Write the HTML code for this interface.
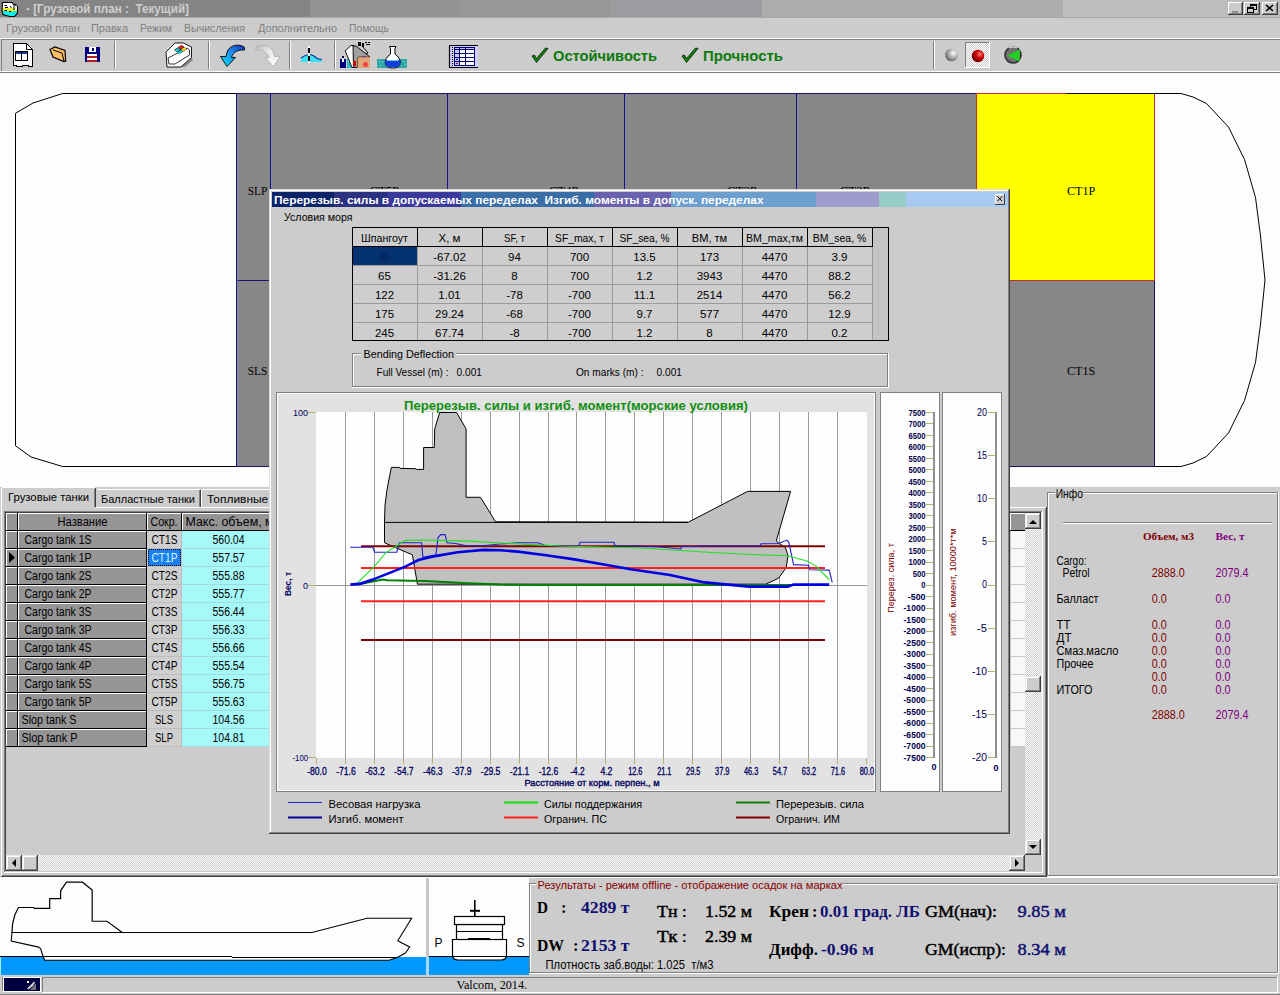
<!DOCTYPE html>
<html><head><meta charset="utf-8"><title>Valcom</title>
<style>
html,body{margin:0;padding:0;background:#cccccc;overflow:hidden;}
svg{display:block;}
text{font-family:"Liberation Sans",sans-serif;}
.sr text,text.sr{font-family:"Liberation Serif",serif;}
.c{shape-rendering:crispEdges;}
</style></head><body>
<svg width="1280" height="995" viewBox="0 0 1280 995">
<defs>
<pattern id="dith" width="2" height="2" patternUnits="userSpaceOnUse"><rect width="2" height="2" fill="#cccccc"/><rect width="1" height="1" fill="#ffffff"/><rect x="1" y="1" width="1" height="1" fill="#ffffff"/></pattern>
<radialGradient id="gsph" cx="0.65" cy="0.35" r="0.7"><stop offset="0" stop-color="#ffffff"/><stop offset="0.5" stop-color="#b0b0b0"/><stop offset="1" stop-color="#606060"/></radialGradient>
<radialGradient id="rsph" cx="0.65" cy="0.35" r="0.7"><stop offset="0" stop-color="#ff8080"/><stop offset="0.45" stop-color="#d00000"/><stop offset="1" stop-color="#600000"/></radialGradient>
</defs>
<rect width="1280" height="995" fill="#cccccc"/>
<!-- TITLE BAR -->
<g class="c">
<rect x="0" y="17" width="1280" height="1" fill="#a8a8a8"/>
<rect x="0" y="0" width="310" height="17" fill="#848484"/>
<rect x="310" y="0" width="151" height="17" fill="#949494"/>
<rect x="461" y="0" width="150" height="17" fill="#979797"/>
<rect x="611" y="0" width="151" height="17" fill="#9b9c9f"/>
<rect x="762" y="0" width="301" height="17" fill="#adadad"/>
<rect x="1063" y="0" width="217" height="17" fill="#bdbdbd"/>
</g>
<!-- app icon -->
<defs><linearGradient id="appg" x1="0" y1="0" x2="0" y2="1"><stop offset="0" stop-color="#ffffff"/><stop offset="0.38" stop-color="#ffffff"/><stop offset="0.38" stop-color="#f0f020"/><stop offset="0.6" stop-color="#f0f020"/><stop offset="0.6" stop-color="#10f0f0"/><stop offset="1" stop-color="#10f0f0"/></linearGradient></defs>
<path d="M2.5 2.5 L12.5 2.5 L13 4 L15 4.5 L17.5 7 L17.5 13 L14.5 16.5 L10 16.5 L6 15.5 L3 14.5 L2 11 Z" fill="url(#appg)" stroke="#000" stroke-width="1.1"/>
<path d="M4.5 5.5 H7 M5 7.5 H8 M10 6 L11.5 8 M4.5 10.5 H7 M9 11.5 H11 M14 5 V10" stroke="#000" stroke-width="1"/>
<rect x="15" y="6" width="2" height="4" fill="#f8f8d0"/>
<text x="26" y="13" font-size="12" font-weight="bold" fill="#cfcfcf" style="white-space:pre" textLength="163" lengthAdjust="spacingAndGlyphs">- [Грузовой план :  Текущий]</text>
<!-- caption buttons -->
<g class="c">
<rect x="1228" y="2" width="15" height="13" fill="#cccccc"/><rect x="1228" y="2" width="15" height="1" fill="#fff"/><rect x="1228" y="2" width="1" height="13" fill="#fff"/><rect x="1228" y="14" width="15" height="1" fill="#404040"/><rect x="1242" y="2" width="1" height="13" fill="#404040"/><rect x="1229" y="13" width="13" height="1" fill="#808080"/><rect x="1241" y="3" width="1" height="11" fill="#808080"/>
<rect x="1232" y="11" width="6" height="1.5" fill="#909090"/>
<rect x="1244" y="2" width="16" height="13" fill="#cccccc"/><rect x="1244" y="2" width="16" height="1" fill="#fff"/><rect x="1244" y="2" width="1" height="13" fill="#fff"/><rect x="1244" y="14" width="16" height="1" fill="#404040"/><rect x="1259" y="2" width="1" height="13" fill="#404040"/><rect x="1245" y="13" width="14" height="1" fill="#808080"/><rect x="1258" y="3" width="1" height="11" fill="#808080"/>
<rect x="1250" y="4.5" width="6" height="5" fill="none" stroke="#000" stroke-width="1"/><rect x="1250" y="4" width="6" height="2" fill="#000"/>
<rect x="1247.5" y="7.5" width="6" height="5" fill="#cccccc" stroke="#000" stroke-width="1"/><rect x="1247" y="7" width="7" height="2" fill="#000"/>
<rect x="1262" y="2" width="16" height="13" fill="#cccccc"/><rect x="1262" y="2" width="16" height="1" fill="#fff"/><rect x="1262" y="2" width="1" height="13" fill="#fff"/><rect x="1262" y="14" width="16" height="1" fill="#404040"/><rect x="1277" y="2" width="1" height="13" fill="#404040"/><rect x="1263" y="13" width="14" height="1" fill="#808080"/><rect x="1276" y="3" width="1" height="11" fill="#808080"/>
</g>
<path d="M1266 5 L1273 11 M1273 5 L1266 11" stroke="#000" stroke-width="1.6"/>
<!-- MENU BAR -->
<g fill="#808080" font-size="11">
<text x="6" y="32" textLength="74" lengthAdjust="spacingAndGlyphs">Грузовой план</text>
<text x="91" y="32" textLength="37" lengthAdjust="spacingAndGlyphs">Правка</text>
<text x="140" y="32" textLength="32" lengthAdjust="spacingAndGlyphs">Режим</text>
<text x="184" y="32" textLength="61" lengthAdjust="spacingAndGlyphs">Вычисления</text>
<text x="258" y="32" textLength="79" lengthAdjust="spacingAndGlyphs">Дополнительно</text>
<text x="349" y="32" textLength="40" lengthAdjust="spacingAndGlyphs">Помощь</text>
</g>
<!-- TOOLBAR -->
<g class="c">
<rect x="0" y="38" width="1280" height="1" fill="#ffffff"/>
<rect x="1" y="39" width="1279" height="1" fill="#808080"/>
<rect x="1" y="39" width="1" height="32" fill="#808080"/>
<rect x="0" y="71" width="1280" height="1" fill="#ffffff"/>
<rect x="0" y="72" width="1280" height="1" fill="#808080"/>
<rect x="114" y="41" width="1" height="28" fill="#808080"/><rect x="115" y="41" width="1" height="28" fill="#ffffff"/>
<rect x="208" y="41" width="1" height="28" fill="#808080"/><rect x="209" y="41" width="1" height="28" fill="#ffffff"/>
<rect x="289" y="41" width="1" height="28" fill="#808080"/><rect x="290" y="41" width="1" height="28" fill="#ffffff"/>
<rect x="334" y="41" width="1" height="28" fill="#808080"/><rect x="335" y="41" width="1" height="28" fill="#ffffff"/>
<rect x="933" y="41" width="1" height="28" fill="#808080"/><rect x="934" y="41" width="1" height="28" fill="#ffffff"/>
</g>
<!-- toolbar icons -->
<g>
<!-- doc icon -->
<path d="M13.5 43.5 H26.5 L32.5 49.5 V66.5 H29 L28 65.5 H23 L22 66.5 H17 L16 65.5 H13.5 Z" fill="#ffffff" stroke="#000" stroke-width="1" class="c"/>
<path d="M26.5 43.5 V49.5 H32.5" fill="none" stroke="#000" stroke-width="1"/>
<rect x="15.5" y="51.5" width="12" height="9" fill="#fff" stroke="#000" stroke-width="1" class="c"/>
<rect x="16" y="52" width="11" height="2" fill="#1a3a8a" class="c"/>
<rect x="21" y="52" width="1" height="8" fill="#000" class="c"/>
<!-- folder -->
<path d="M50 49.5 L55 47 L65 50.5 L65.7 61 L64 61.6 L53 57 Z" fill="#f8c060" stroke="#000" stroke-width="1.2"/>
<path d="M53 50 L62 53 L64 61" fill="none" stroke="#000" stroke-width="1"/>
<!-- floppy -->
<rect x="85" y="47" width="15" height="15" fill="#000080" class="c"/>
<rect x="89" y="47" width="7" height="5" fill="#ffffff" class="c"/><rect x="92" y="48" width="2" height="3" fill="#000080" class="c"/>
<rect x="87" y="54" width="10" height="2" fill="#ffffff" class="c"/><rect x="87" y="56" width="10" height="2" fill="#b02020" class="c"/>
<rect x="87" y="58" width="10" height="2" fill="#ffffff" class="c"/><rect x="87" y="60" width="10" height="2" fill="#b02020" class="c"/>
<!-- tag/eraser icon -->
<path d="M191.5 57 L181 67 L185 67 L193 60 Z" fill="#8a8a8a"/>
<path d="M166 52 L175 43 L183.5 43 L191.5 47 L191.5 57.5 L181 67 L167 67 Z" fill="#ffffff" stroke="#000" stroke-width="0.9"/>
<path d="M168 58 L172 56 L187 48 L189.5 50 L189.5 55 L175 64 L169 64 Z" fill="none" stroke="#000" stroke-width="0.8"/>
<path d="M174 50 L181.5 45 L187 49 L179.5 54 Z" fill="#000"/>
<path d="M178 47.5 L181.5 45.3 L184 47 L180.5 49.2 Z" fill="#e02020"/>
<path d="M181 49.5 L184.5 47.3 L186.6 49 L183 51.2 Z" fill="#f0e020"/>
<path d="M174.5 50.3 L178 48 L180.2 49.6 L176.7 51.9 Z" fill="#20c8d8"/>
<path d="M177.3 52.3 L180.8 50 L183 51.6 L179.5 53.9 Z" fill="#20c8d8"/>
<!-- undo arrow (blue) -->
<defs><linearGradient id="ublue" x1="0" y1="1" x2="1" y2="0"><stop offset="0" stop-color="#00e8f8"/><stop offset="0.55" stop-color="#2090f0"/><stop offset="1" stop-color="#1030c0"/></linearGradient>
<linearGradient id="ugray" x1="1" y1="1" x2="0" y2="0"><stop offset="0" stop-color="#ffffff"/><stop offset="0.6" stop-color="#e8e8e8"/><stop offset="1" stop-color="#b8b8b8"/></linearGradient></defs>
<path d="M220.5 56.5 L227 66.5 L235.5 57.5 L231.5 57.5 C233 52 238 49.5 244.5 50 L244.5 47.5 C241 44 232 44 228 50 C227 52 226.5 54 226 56.5 Z" fill="url(#ublue)" stroke="#000" stroke-width="0.9"/>
<!-- redo arrow (gray) -->
<path d="M280 56.5 L273.5 66.5 L265 57.5 L269 57.5 C267.5 52 262.5 49.5 256 50 L255.5 47.5 C259 44 268 44 272.5 50 C273.5 52 274 54 274.5 56.5 Z" fill="url(#ugray)" stroke="#b0b0b0" stroke-width="0.9"/>
<!-- draft icon -->
<path d="M301 58 Q305 55 309 54.5 Q313 54.5 317 58.5 L321.7 59.7 L321.7 62 L301 62 Z" fill="#40e0f0"/>
<path d="M301 58 Q305 55 309 54.5 Q313 54.5 317 58.5 L321.7 59.7" fill="none" stroke="#0030a0" stroke-width="1.2"/>
<rect x="308" y="46" width="2" height="17" fill="#ffffff" class="c"/>
<rect x="308" y="48" width="2" height="5" fill="#000" class="c"/><rect x="308" y="56" width="2" height="5" fill="#000" class="c"/>
<!-- cargo icon -->
<rect x="346.5" y="59" width="6" height="9" fill="#30b8c0" class="c"/>
<g fill="#a0f0f0" class="c"><rect x="348" y="61" width="1" height="1"/><rect x="350" y="64" width="1" height="1"/></g>
<path d="M345.2 50.8 L351 45.5 L354 45.5 L353.5 67.5 L352 67.5 Z" fill="#ffffff" stroke="#000" stroke-width="0.9"/>
<path d="M353 46 L356 46 L370 57 L358 67.5 L353.5 67.5 Z" fill="#a0a0a0" stroke="#000" stroke-width="0.9"/>
<rect x="358" y="42" width="3" height="4" fill="#000" class="c"/><rect x="362" y="43" width="2" height="4" fill="#000" class="c"/>
<rect x="365" y="42" width="2" height="1" fill="#000" class="c"/><rect x="368" y="42" width="2" height="1" fill="#000" class="c"/><rect x="366" y="44" width="4" height="1" fill="#000" class="c"/>
<path d="M363 47 L368 53 L366 54" fill="none" stroke="#000" stroke-width="0.9"/>
<rect x="357" y="57" width="13" height="11" fill="#e0a878" class="c"/>
<path d="M357.5 68 V57.5 L362 56.5 L370 57" fill="none" stroke="#704020" stroke-width="0.8"/>
<circle cx="365.5" cy="64.5" r="2.5" fill="#f04040"/>
<path d="M362 57.5 L364 56 L366 57.5" fill="#6040c0"/>
<rect x="353" y="61" width="3" height="5" fill="#d00000" class="c"/>
<rect x="340" y="58.5" width="6" height="9" fill="#000080" class="c"/><rect x="342" y="56" width="2" height="2" fill="#000040" class="c"/>
<rect x="342" y="59" width="2" height="3" fill="#ffffff" class="c"/>
<!-- flask icon -->
<rect x="377" y="59" width="30" height="9" fill="#30a8a8" class="c"/>
<g fill="#80e0e0" class="c"><rect x="379" y="61" width="1" height="1"/><rect x="382" y="62" width="1" height="1"/><rect x="380" y="65" width="1" height="1"/><rect x="403" y="61" width="1" height="1"/><rect x="405" y="64" width="1" height="1"/></g>
<path d="M389.5 46.5 H396 L395 48.5 V54 Q401 58.5 400.2 63.5 Q399.5 68 392.75 68 Q386 68 385.3 63.5 Q384.5 58.5 390.5 54 V48.5 Z" fill="#ffffff" stroke="#000" stroke-width="1"/>
<path d="M385.6 60 H399.9 Q400.8 62 400.2 63.5 Q399.5 67.5 392.75 67.5 Q386 67.5 385.3 63.5 Q384.8 62 385.6 60 Z" fill="#1040d8"/>
<path d="M387 60.5 H398.5" stroke="#60d0f0" stroke-width="1"/>
<!-- table icon -->
<rect x="449" y="45" width="29" height="23" fill="#d0d0ff" class="c"/>
<path d="M478 45.5 H449.5 V67.5 H478" fill="none" stroke="#000" stroke-width="1.2"/>
<rect x="454" y="47" width="21" height="19" fill="#000070" class="c"/>
<rect x="455" y="48" width="4" height="1" fill="#c0c0ff" class="c"/><rect x="460" y="48" width="5" height="1" fill="#c0c0ff" class="c"/><rect x="466" y="48" width="8" height="1" fill="#c0c0ff" class="c"/>
<g fill="#ffffff" class="c">
<rect x="460" y="50" width="5" height="3"/><rect x="466" y="50" width="8" height="3"/>
<rect x="460" y="54" width="5" height="3"/><rect x="466" y="54" width="8" height="3"/>
<rect x="460" y="58" width="5" height="3"/><rect x="466" y="58" width="8" height="3"/>
<rect x="460" y="62" width="5" height="3"/><rect x="466" y="62" width="8" height="3"/>
</g>
<g fill="#c8c8ff" class="c"><rect x="455" y="50" width="4" height="3"/><rect x="455" y="54" width="4" height="3"/><rect x="455" y="58" width="4" height="3"/><rect x="455" y="62" width="4" height="3"/></g>
<rect x="456" y="59" width="2" height="1" fill="#000080" class="c"/><rect x="456" y="63" width="2" height="1" fill="#800020" class="c"/>
<g fill="#000" class="c"><rect x="452" y="47" width="1" height="1"/><rect x="452" y="49" width="1" height="1"/><rect x="452" y="51" width="1" height="1"/><rect x="452" y="53" width="1" height="1"/><rect x="452" y="55" width="1" height="1"/><rect x="452" y="57" width="1" height="1"/><rect x="452" y="59" width="1" height="1"/><rect x="452" y="61" width="1" height="1"/><rect x="452" y="63" width="1" height="1"/><rect x="452" y="65" width="1" height="1"/></g>
<!-- checks + labels -->
<path d="M532 56 L536.5 62.5 L548 48.5 L545.5 48 L536.5 58.5 L534.5 55 Z" fill="#108010" stroke="#002000" stroke-width="0.8"/>
<text x="553" y="61" font-size="14" font-weight="bold" fill="#0a7a0a" textLength="104" lengthAdjust="spacingAndGlyphs">Остойчивость</text>
<path d="M682 56 L686.5 62.5 L698 48.5 L695.5 48 L686.5 58.5 L684.5 55 Z" fill="#108010" stroke="#002000" stroke-width="0.8"/>
<text x="703" y="61" font-size="14" font-weight="bold" fill="#0a7a0a" textLength="80" lengthAdjust="spacingAndGlyphs">Прочность</text>
<!-- spheres -->
<circle cx="951.5" cy="55" r="6.3" fill="url(#gsph)"/>
<rect x="965" y="42" width="25" height="26" fill="url(#dith)" class="c"/>
<rect x="965" y="42" width="25" height="1" fill="#808080" class="c"/><rect x="965" y="42" width="1" height="26" fill="#808080" class="c"/>
<rect x="965" y="67" width="25" height="1" fill="#ffffff" class="c"/><rect x="989" y="42" width="1" height="26" fill="#ffffff" class="c"/>
<circle cx="978" cy="56" r="6.2" fill="url(#rsph)"/>
<circle cx="1013" cy="55" r="8.8" fill="#303030"/>
<circle cx="1013" cy="55" r="7.2" fill="#707070"/>
<path d="M1007 55.5 L1020 49.5 L1019.5 61.5 Z" fill="#20d020"/>
<path d="M1009 48 Q1013 46 1017 48" stroke="#d0d0d0" stroke-width="1.5" fill="none"/>
</g>
<!-- MAIN PLAN AREA -->
<rect x="0" y="73" width="1280" height="414" fill="#fdfdfd" class="c"/>
<g class="c">
<rect x="237" y="94" width="33" height="186" fill="#878787"/>
<rect x="237" y="280" width="33" height="187" fill="#878787"/>
<rect x="270" y="94" width="707" height="373" fill="#878787"/>
<rect x="977" y="94" width="177" height="186" fill="#ffff00"/>
<rect x="977" y="280" width="177" height="187" fill="#878787"/>
<!-- blue tank borders -->
<g fill="#16166c">
<rect x="236" y="93" width="741" height="1"/>
<rect x="236" y="466" width="918" height="1"/>
<rect x="236" y="93" width="1" height="374"/>
<rect x="270" y="93" width="1" height="374"/>
<rect x="447" y="93" width="1" height="374"/>
<rect x="624" y="93" width="1" height="374"/>
<rect x="796" y="93" width="1" height="374"/>
<rect x="236" y="280" width="741" height="1"/>
<rect x="977" y="280" width="177" height="1"/>
<rect x="1154" y="280" width="1" height="187"/>
<rect x="976" y="280" width="1" height="187"/>
</g>
<g fill="#8080e0" opacity="0.6">
<rect x="237" y="94" width="1" height="372"/><rect x="271" y="94" width="1" height="372"/><rect x="448" y="94" width="1" height="372"/><rect x="625" y="94" width="1" height="372"/><rect x="797" y="94" width="1" height="372"/>
</g>
<!-- CT1P red border -->
<rect x="977" y="93" width="178" height="1" fill="#c03030"/>
<rect x="976" y="93" width="1" height="188" fill="#c03030"/>
<rect x="1154" y="93" width="1" height="188" fill="#c03030"/>
<rect x="977" y="280" width="178" height="1" fill="#c03030"/>
<rect x="1066" y="93" width="89" height="1" fill="#101010"/>
</g>
<!-- hull outline -->
<path d="M236 93.5 H62.6 L33 103 L15.5 113.3 V445.8 L31 457 L62.6 466.5 H236" fill="none" stroke="#000" stroke-width="1"/>
<path d="M1154.5 93.5 H1181 L1193 97 L1206.5 103.5 L1228.5 127 L1244.5 159.5 L1255.5 197.5 L1260.5 236 L1265 280 L1260.5 324 L1255.5 362.5 L1244.5 400.5 L1228.5 433 L1206.5 456.5 L1193 463 L1181 466.5 H1154.5" fill="none" stroke="#000" stroke-width="1"/>
<!-- tank labels -->
<g class="sr" font-size="13" fill="#000">
<text x="247.7" y="194.7" textLength="19.5" lengthAdjust="spacingAndGlyphs">SLP</text>
<text x="247.7" y="375" textLength="19.5" lengthAdjust="spacingAndGlyphs">SLS</text>
<text x="1067" y="194.7" textLength="28.3" lengthAdjust="spacingAndGlyphs">CT1P</text>
<text x="1067" y="375" textLength="28.3" lengthAdjust="spacingAndGlyphs">CT1S</text>
<text x="369.5" y="194.7" textLength="29.5" lengthAdjust="spacingAndGlyphs">CT5P</text>
<text x="549" y="194.7" textLength="29.5" lengthAdjust="spacingAndGlyphs">CT4P</text>
<text x="727" y="194.7" textLength="30" lengthAdjust="spacingAndGlyphs">CT3P</text>
<text x="840" y="194.7" textLength="29.5" lengthAdjust="spacingAndGlyphs">CT2P</text>
</g>
<!-- LOWER PANEL -->
<g class="c">
<rect x="0" y="487" width="1280" height="390" fill="#cccccc"/>
<rect x="1" y="507" width="1045" height="1" fill="#ffffff"/>
<rect x="1" y="507" width="1" height="369" fill="#ffffff"/>
<rect x="1045" y="508" width="1" height="368" fill="#808080"/><rect x="1046" y="507" width="1" height="370" fill="#404040"/>
<rect x="2" y="875" width="1044" height="1" fill="#808080"/><rect x="1" y="876" width="1046" height="1" fill="#404040"/>
<rect x="1" y="488" width="95" height="20" fill="#cccccc"/>
<rect x="1" y="488" width="1" height="20" fill="#ffffff"/><rect x="2" y="487" width="93" height="1" fill="#ffffff"/>
<rect x="95" y="488" width="1" height="19" fill="#404040"/><rect x="94" y="489" width="1" height="18" fill="#808080"/>
<rect x="96" y="490" width="105" height="17" fill="#cccccc"/>
<rect x="97" y="489" width="103" height="1" fill="#ffffff"/><rect x="200" y="490" width="1" height="17" fill="#404040"/><rect x="199" y="490" width="1" height="17" fill="#808080"/>
<rect x="201" y="490" width="80" height="17" fill="#cccccc"/>
<rect x="201" y="490" width="1" height="17" fill="#ffffff"/><rect x="202" y="489" width="80" height="1" fill="#ffffff"/>
<rect x="4" y="511" width="1038" height="1" fill="#808080"/><rect x="4" y="511" width="1" height="361" fill="#808080"/>
<rect x="5" y="512" width="1036" height="1" fill="#404040"/><rect x="5" y="512" width="1" height="359" fill="#404040"/>
<rect x="4" y="872" width="1039" height="1" fill="#ffffff"/><rect x="1042" y="511" width="1" height="362" fill="#ffffff"/>
</g>
<g font-size="11" fill="#000">
<text x="8" y="501" textLength="81" lengthAdjust="spacingAndGlyphs">Грузовые танки</text>
<text x="101" y="503" textLength="94" lengthAdjust="spacingAndGlyphs">Балластные танки</text>
<text x="207" y="503" textLength="70" lengthAdjust="spacingAndGlyphs">Топливные т</text>
</g>
<g class="c">
<rect x="6" y="513" width="12" height="18" fill="#959595"/><rect x="6" y="513" width="12" height="1" fill="#ffffff"/><rect x="6" y="513" width="1" height="18" fill="#ffffff"/><rect x="6" y="530" width="12" height="1" fill="#000000"/><rect x="17" y="513" width="1" height="18" fill="#000000"/>
<rect x="18" y="513" width="129" height="18" fill="#959595"/><rect x="18" y="513" width="129" height="1" fill="#ffffff"/><rect x="18" y="513" width="1" height="18" fill="#ffffff"/><rect x="18" y="530" width="129" height="1" fill="#000000"/><rect x="146" y="513" width="1" height="18" fill="#000000"/>
<rect x="147" y="513" width="35" height="18" fill="#959595"/><rect x="147" y="513" width="35" height="1" fill="#ffffff"/><rect x="147" y="513" width="1" height="18" fill="#ffffff"/><rect x="147" y="530" width="35" height="1" fill="#000000"/><rect x="181" y="513" width="1" height="18" fill="#000000"/>
<rect x="182" y="513" width="100" height="18" fill="#959595"/><rect x="182" y="513" width="100" height="1" fill="#ffffff"/><rect x="182" y="513" width="1" height="18" fill="#ffffff"/><rect x="182" y="530" width="100" height="1" fill="#000000"/><rect x="281" y="513" width="1" height="18" fill="#000000"/>
<rect x="1010" y="513" width="16" height="18" fill="#959595"/><rect x="1010" y="513" width="16" height="1" fill="#ffffff"/><rect x="1010" y="513" width="1" height="18" fill="#ffffff"/><rect x="1010" y="530" width="16" height="1" fill="#000000"/><rect x="1025" y="513" width="1" height="18" fill="#000000"/>
<rect x="6" y="531" width="12" height="18" fill="#959595"/><rect x="6" y="531" width="12" height="1" fill="#ffffff"/><rect x="6" y="531" width="1" height="18" fill="#ffffff"/><rect x="6" y="548" width="12" height="1" fill="#000000"/><rect x="17" y="531" width="1" height="18" fill="#000000"/>
<rect x="18" y="531" width="129" height="18" fill="#959595"/><rect x="18" y="531" width="129" height="1" fill="#ffffff"/><rect x="18" y="531" width="1" height="18" fill="#ffffff"/><rect x="18" y="548" width="129" height="1" fill="#000000"/><rect x="146" y="531" width="1" height="18" fill="#000000"/>
<rect x="147" y="531" width="35" height="18" fill="#cfcfcf"/><rect x="147" y="548" width="35" height="1" fill="#bdbdbd"/><rect x="181" y="531" width="1" height="18" fill="#bdbdbd"/>
<rect x="182" y="531" width="100" height="18" fill="#a6f9f9"/><rect x="182" y="548" width="100" height="1" fill="#a0dcdc"/>
<rect x="1010" y="531" width="15" height="18" fill="#f8f8f8"/><rect x="1010" y="548" width="15" height="1" fill="#c8c8c8"/><rect x="1010" y="531" width="1" height="18" fill="#c8c8c8"/>
<rect x="6" y="549" width="12" height="18" fill="#959595"/><rect x="6" y="549" width="12" height="1" fill="#ffffff"/><rect x="6" y="549" width="1" height="18" fill="#ffffff"/><rect x="6" y="566" width="12" height="1" fill="#000000"/><rect x="17" y="549" width="1" height="18" fill="#000000"/>
<rect x="18" y="549" width="129" height="18" fill="#959595"/><rect x="18" y="549" width="129" height="1" fill="#ffffff"/><rect x="18" y="549" width="1" height="18" fill="#ffffff"/><rect x="18" y="566" width="129" height="1" fill="#000000"/><rect x="146" y="549" width="1" height="18" fill="#000000"/>
<rect x="147" y="549" width="35" height="18" fill="#cfcfcf"/><rect x="147" y="566" width="35" height="1" fill="#bdbdbd"/><rect x="181" y="549" width="1" height="18" fill="#bdbdbd"/>
<rect x="182" y="549" width="100" height="18" fill="#a6f9f9"/><rect x="182" y="566" width="100" height="1" fill="#a0dcdc"/>
<rect x="1010" y="549" width="15" height="18" fill="#f8f8f8"/><rect x="1010" y="566" width="15" height="1" fill="#c8c8c8"/><rect x="1010" y="549" width="1" height="18" fill="#c8c8c8"/>
<rect x="6" y="567" width="12" height="18" fill="#959595"/><rect x="6" y="567" width="12" height="1" fill="#ffffff"/><rect x="6" y="567" width="1" height="18" fill="#ffffff"/><rect x="6" y="584" width="12" height="1" fill="#000000"/><rect x="17" y="567" width="1" height="18" fill="#000000"/>
<rect x="18" y="567" width="129" height="18" fill="#959595"/><rect x="18" y="567" width="129" height="1" fill="#ffffff"/><rect x="18" y="567" width="1" height="18" fill="#ffffff"/><rect x="18" y="584" width="129" height="1" fill="#000000"/><rect x="146" y="567" width="1" height="18" fill="#000000"/>
<rect x="147" y="567" width="35" height="18" fill="#cfcfcf"/><rect x="147" y="584" width="35" height="1" fill="#bdbdbd"/><rect x="181" y="567" width="1" height="18" fill="#bdbdbd"/>
<rect x="182" y="567" width="100" height="18" fill="#a6f9f9"/><rect x="182" y="584" width="100" height="1" fill="#a0dcdc"/>
<rect x="1010" y="567" width="15" height="18" fill="#f8f8f8"/><rect x="1010" y="584" width="15" height="1" fill="#c8c8c8"/><rect x="1010" y="567" width="1" height="18" fill="#c8c8c8"/>
<rect x="6" y="585" width="12" height="18" fill="#959595"/><rect x="6" y="585" width="12" height="1" fill="#ffffff"/><rect x="6" y="585" width="1" height="18" fill="#ffffff"/><rect x="6" y="602" width="12" height="1" fill="#000000"/><rect x="17" y="585" width="1" height="18" fill="#000000"/>
<rect x="18" y="585" width="129" height="18" fill="#959595"/><rect x="18" y="585" width="129" height="1" fill="#ffffff"/><rect x="18" y="585" width="1" height="18" fill="#ffffff"/><rect x="18" y="602" width="129" height="1" fill="#000000"/><rect x="146" y="585" width="1" height="18" fill="#000000"/>
<rect x="147" y="585" width="35" height="18" fill="#cfcfcf"/><rect x="147" y="602" width="35" height="1" fill="#bdbdbd"/><rect x="181" y="585" width="1" height="18" fill="#bdbdbd"/>
<rect x="182" y="585" width="100" height="18" fill="#a6f9f9"/><rect x="182" y="602" width="100" height="1" fill="#a0dcdc"/>
<rect x="1010" y="585" width="15" height="18" fill="#f8f8f8"/><rect x="1010" y="602" width="15" height="1" fill="#c8c8c8"/><rect x="1010" y="585" width="1" height="18" fill="#c8c8c8"/>
<rect x="6" y="603" width="12" height="18" fill="#959595"/><rect x="6" y="603" width="12" height="1" fill="#ffffff"/><rect x="6" y="603" width="1" height="18" fill="#ffffff"/><rect x="6" y="620" width="12" height="1" fill="#000000"/><rect x="17" y="603" width="1" height="18" fill="#000000"/>
<rect x="18" y="603" width="129" height="18" fill="#959595"/><rect x="18" y="603" width="129" height="1" fill="#ffffff"/><rect x="18" y="603" width="1" height="18" fill="#ffffff"/><rect x="18" y="620" width="129" height="1" fill="#000000"/><rect x="146" y="603" width="1" height="18" fill="#000000"/>
<rect x="147" y="603" width="35" height="18" fill="#cfcfcf"/><rect x="147" y="620" width="35" height="1" fill="#bdbdbd"/><rect x="181" y="603" width="1" height="18" fill="#bdbdbd"/>
<rect x="182" y="603" width="100" height="18" fill="#a6f9f9"/><rect x="182" y="620" width="100" height="1" fill="#a0dcdc"/>
<rect x="1010" y="603" width="15" height="18" fill="#f8f8f8"/><rect x="1010" y="620" width="15" height="1" fill="#c8c8c8"/><rect x="1010" y="603" width="1" height="18" fill="#c8c8c8"/>
<rect x="6" y="621" width="12" height="18" fill="#959595"/><rect x="6" y="621" width="12" height="1" fill="#ffffff"/><rect x="6" y="621" width="1" height="18" fill="#ffffff"/><rect x="6" y="638" width="12" height="1" fill="#000000"/><rect x="17" y="621" width="1" height="18" fill="#000000"/>
<rect x="18" y="621" width="129" height="18" fill="#959595"/><rect x="18" y="621" width="129" height="1" fill="#ffffff"/><rect x="18" y="621" width="1" height="18" fill="#ffffff"/><rect x="18" y="638" width="129" height="1" fill="#000000"/><rect x="146" y="621" width="1" height="18" fill="#000000"/>
<rect x="147" y="621" width="35" height="18" fill="#cfcfcf"/><rect x="147" y="638" width="35" height="1" fill="#bdbdbd"/><rect x="181" y="621" width="1" height="18" fill="#bdbdbd"/>
<rect x="182" y="621" width="100" height="18" fill="#a6f9f9"/><rect x="182" y="638" width="100" height="1" fill="#a0dcdc"/>
<rect x="1010" y="621" width="15" height="18" fill="#f8f8f8"/><rect x="1010" y="638" width="15" height="1" fill="#c8c8c8"/><rect x="1010" y="621" width="1" height="18" fill="#c8c8c8"/>
<rect x="6" y="639" width="12" height="18" fill="#959595"/><rect x="6" y="639" width="12" height="1" fill="#ffffff"/><rect x="6" y="639" width="1" height="18" fill="#ffffff"/><rect x="6" y="656" width="12" height="1" fill="#000000"/><rect x="17" y="639" width="1" height="18" fill="#000000"/>
<rect x="18" y="639" width="129" height="18" fill="#959595"/><rect x="18" y="639" width="129" height="1" fill="#ffffff"/><rect x="18" y="639" width="1" height="18" fill="#ffffff"/><rect x="18" y="656" width="129" height="1" fill="#000000"/><rect x="146" y="639" width="1" height="18" fill="#000000"/>
<rect x="147" y="639" width="35" height="18" fill="#cfcfcf"/><rect x="147" y="656" width="35" height="1" fill="#bdbdbd"/><rect x="181" y="639" width="1" height="18" fill="#bdbdbd"/>
<rect x="182" y="639" width="100" height="18" fill="#a6f9f9"/><rect x="182" y="656" width="100" height="1" fill="#a0dcdc"/>
<rect x="1010" y="639" width="15" height="18" fill="#f8f8f8"/><rect x="1010" y="656" width="15" height="1" fill="#c8c8c8"/><rect x="1010" y="639" width="1" height="18" fill="#c8c8c8"/>
<rect x="6" y="657" width="12" height="18" fill="#959595"/><rect x="6" y="657" width="12" height="1" fill="#ffffff"/><rect x="6" y="657" width="1" height="18" fill="#ffffff"/><rect x="6" y="674" width="12" height="1" fill="#000000"/><rect x="17" y="657" width="1" height="18" fill="#000000"/>
<rect x="18" y="657" width="129" height="18" fill="#959595"/><rect x="18" y="657" width="129" height="1" fill="#ffffff"/><rect x="18" y="657" width="1" height="18" fill="#ffffff"/><rect x="18" y="674" width="129" height="1" fill="#000000"/><rect x="146" y="657" width="1" height="18" fill="#000000"/>
<rect x="147" y="657" width="35" height="18" fill="#cfcfcf"/><rect x="147" y="674" width="35" height="1" fill="#bdbdbd"/><rect x="181" y="657" width="1" height="18" fill="#bdbdbd"/>
<rect x="182" y="657" width="100" height="18" fill="#a6f9f9"/><rect x="182" y="674" width="100" height="1" fill="#a0dcdc"/>
<rect x="1010" y="657" width="15" height="18" fill="#f8f8f8"/><rect x="1010" y="674" width="15" height="1" fill="#c8c8c8"/><rect x="1010" y="657" width="1" height="18" fill="#c8c8c8"/>
<rect x="6" y="675" width="12" height="18" fill="#959595"/><rect x="6" y="675" width="12" height="1" fill="#ffffff"/><rect x="6" y="675" width="1" height="18" fill="#ffffff"/><rect x="6" y="692" width="12" height="1" fill="#000000"/><rect x="17" y="675" width="1" height="18" fill="#000000"/>
<rect x="18" y="675" width="129" height="18" fill="#959595"/><rect x="18" y="675" width="129" height="1" fill="#ffffff"/><rect x="18" y="675" width="1" height="18" fill="#ffffff"/><rect x="18" y="692" width="129" height="1" fill="#000000"/><rect x="146" y="675" width="1" height="18" fill="#000000"/>
<rect x="147" y="675" width="35" height="18" fill="#cfcfcf"/><rect x="147" y="692" width="35" height="1" fill="#bdbdbd"/><rect x="181" y="675" width="1" height="18" fill="#bdbdbd"/>
<rect x="182" y="675" width="100" height="18" fill="#a6f9f9"/><rect x="182" y="692" width="100" height="1" fill="#a0dcdc"/>
<rect x="1010" y="675" width="15" height="18" fill="#f8f8f8"/><rect x="1010" y="692" width="15" height="1" fill="#c8c8c8"/><rect x="1010" y="675" width="1" height="18" fill="#c8c8c8"/>
<rect x="6" y="693" width="12" height="18" fill="#959595"/><rect x="6" y="693" width="12" height="1" fill="#ffffff"/><rect x="6" y="693" width="1" height="18" fill="#ffffff"/><rect x="6" y="710" width="12" height="1" fill="#000000"/><rect x="17" y="693" width="1" height="18" fill="#000000"/>
<rect x="18" y="693" width="129" height="18" fill="#959595"/><rect x="18" y="693" width="129" height="1" fill="#ffffff"/><rect x="18" y="693" width="1" height="18" fill="#ffffff"/><rect x="18" y="710" width="129" height="1" fill="#000000"/><rect x="146" y="693" width="1" height="18" fill="#000000"/>
<rect x="147" y="693" width="35" height="18" fill="#cfcfcf"/><rect x="147" y="710" width="35" height="1" fill="#bdbdbd"/><rect x="181" y="693" width="1" height="18" fill="#bdbdbd"/>
<rect x="182" y="693" width="100" height="18" fill="#a6f9f9"/><rect x="182" y="710" width="100" height="1" fill="#a0dcdc"/>
<rect x="1010" y="693" width="15" height="18" fill="#f8f8f8"/><rect x="1010" y="710" width="15" height="1" fill="#c8c8c8"/><rect x="1010" y="693" width="1" height="18" fill="#c8c8c8"/>
<rect x="6" y="711" width="12" height="18" fill="#959595"/><rect x="6" y="711" width="12" height="1" fill="#ffffff"/><rect x="6" y="711" width="1" height="18" fill="#ffffff"/><rect x="6" y="728" width="12" height="1" fill="#000000"/><rect x="17" y="711" width="1" height="18" fill="#000000"/>
<rect x="18" y="711" width="129" height="18" fill="#959595"/><rect x="18" y="711" width="129" height="1" fill="#ffffff"/><rect x="18" y="711" width="1" height="18" fill="#ffffff"/><rect x="18" y="728" width="129" height="1" fill="#000000"/><rect x="146" y="711" width="1" height="18" fill="#000000"/>
<rect x="147" y="711" width="35" height="18" fill="#cfcfcf"/><rect x="147" y="728" width="35" height="1" fill="#bdbdbd"/><rect x="181" y="711" width="1" height="18" fill="#bdbdbd"/>
<rect x="182" y="711" width="100" height="18" fill="#a6f9f9"/><rect x="182" y="728" width="100" height="1" fill="#a0dcdc"/>
<rect x="1010" y="711" width="15" height="18" fill="#f8f8f8"/><rect x="1010" y="728" width="15" height="1" fill="#c8c8c8"/><rect x="1010" y="711" width="1" height="18" fill="#c8c8c8"/>
<rect x="6" y="729" width="12" height="18" fill="#959595"/><rect x="6" y="729" width="12" height="1" fill="#ffffff"/><rect x="6" y="729" width="1" height="18" fill="#ffffff"/><rect x="6" y="746" width="12" height="1" fill="#000000"/><rect x="17" y="729" width="1" height="18" fill="#000000"/>
<rect x="18" y="729" width="129" height="18" fill="#959595"/><rect x="18" y="729" width="129" height="1" fill="#ffffff"/><rect x="18" y="729" width="1" height="18" fill="#ffffff"/><rect x="18" y="746" width="129" height="1" fill="#000000"/><rect x="146" y="729" width="1" height="18" fill="#000000"/>
<rect x="147" y="729" width="35" height="18" fill="#cfcfcf"/><rect x="147" y="746" width="35" height="1" fill="#bdbdbd"/><rect x="181" y="729" width="1" height="18" fill="#bdbdbd"/>
<rect x="182" y="729" width="100" height="18" fill="#a6f9f9"/><rect x="182" y="746" width="100" height="1" fill="#a0dcdc"/>
<rect x="1010" y="729" width="15" height="18" fill="#f8f8f8"/><rect x="1010" y="746" width="15" height="1" fill="#c8c8c8"/><rect x="1010" y="729" width="1" height="18" fill="#c8c8c8"/>
<rect x="148" y="549" width="33" height="17" fill="#1a80f0"/>
</g>
<path d="M148.5 549.5 H180.5 V565.5 H148.5 Z" fill="none" stroke="#000" stroke-width="1" stroke-dasharray="1 1" class="c"/>
<path d="M9 552 L15 557.5 L9 563 Z" fill="#000"/>
<g font-size="12" fill="#000">
<text x="57.5" y="526" textLength="50" lengthAdjust="spacingAndGlyphs">Название</text>
<text x="150.5" y="526" textLength="27" lengthAdjust="spacingAndGlyphs">Сокр.</text>
<text x="185.5" y="526" textLength="95" lengthAdjust="spacingAndGlyphs">Макс. объем, м3</text>
<text x="24.5" y="543.5" textLength="67" lengthAdjust="spacingAndGlyphs">Cargo tank 1S</text>
<text x="151.5" y="543.5" fill="#000" textLength="26" lengthAdjust="spacingAndGlyphs">CT1S</text>
<text x="212.5" y="543.5" textLength="32" lengthAdjust="spacingAndGlyphs">560.04</text>
<text x="24.5" y="561.5" textLength="67" lengthAdjust="spacingAndGlyphs">Cargo tank 1P</text>
<text x="151.5" y="561.5" fill="#d8f4ff" textLength="26" lengthAdjust="spacingAndGlyphs">CT1P</text>
<text x="212.5" y="561.5" textLength="32" lengthAdjust="spacingAndGlyphs">557.57</text>
<text x="24.5" y="579.5" textLength="67" lengthAdjust="spacingAndGlyphs">Cargo tank 2S</text>
<text x="151.5" y="579.5" fill="#000" textLength="26" lengthAdjust="spacingAndGlyphs">CT2S</text>
<text x="212.5" y="579.5" textLength="32" lengthAdjust="spacingAndGlyphs">555.88</text>
<text x="24.5" y="597.5" textLength="67" lengthAdjust="spacingAndGlyphs">Cargo tank 2P</text>
<text x="151.5" y="597.5" fill="#000" textLength="26" lengthAdjust="spacingAndGlyphs">CT2P</text>
<text x="212.5" y="597.5" textLength="32" lengthAdjust="spacingAndGlyphs">555.77</text>
<text x="24.5" y="615.5" textLength="67" lengthAdjust="spacingAndGlyphs">Cargo tank 3S</text>
<text x="151.5" y="615.5" fill="#000" textLength="26" lengthAdjust="spacingAndGlyphs">CT3S</text>
<text x="212.5" y="615.5" textLength="32" lengthAdjust="spacingAndGlyphs">556.44</text>
<text x="24.5" y="633.5" textLength="67" lengthAdjust="spacingAndGlyphs">Cargo tank 3P</text>
<text x="151.5" y="633.5" fill="#000" textLength="26" lengthAdjust="spacingAndGlyphs">CT3P</text>
<text x="212.5" y="633.5" textLength="32" lengthAdjust="spacingAndGlyphs">556.33</text>
<text x="24.5" y="651.5" textLength="67" lengthAdjust="spacingAndGlyphs">Cargo tank 4S</text>
<text x="151.5" y="651.5" fill="#000" textLength="26" lengthAdjust="spacingAndGlyphs">CT4S</text>
<text x="212.5" y="651.5" textLength="32" lengthAdjust="spacingAndGlyphs">556.66</text>
<text x="24.5" y="669.5" textLength="67" lengthAdjust="spacingAndGlyphs">Cargo tank 4P</text>
<text x="151.5" y="669.5" fill="#000" textLength="26" lengthAdjust="spacingAndGlyphs">CT4P</text>
<text x="212.5" y="669.5" textLength="32" lengthAdjust="spacingAndGlyphs">555.54</text>
<text x="24.5" y="687.5" textLength="67" lengthAdjust="spacingAndGlyphs">Cargo tank 5S</text>
<text x="151.5" y="687.5" fill="#000" textLength="26" lengthAdjust="spacingAndGlyphs">CT5S</text>
<text x="212.5" y="687.5" textLength="32" lengthAdjust="spacingAndGlyphs">556.75</text>
<text x="24.5" y="705.5" textLength="67" lengthAdjust="spacingAndGlyphs">Cargo tank 5P</text>
<text x="151.5" y="705.5" fill="#000" textLength="26" lengthAdjust="spacingAndGlyphs">CT5P</text>
<text x="212.5" y="705.5" textLength="32" lengthAdjust="spacingAndGlyphs">555.63</text>
<text x="21.5" y="723.5" textLength="55" lengthAdjust="spacingAndGlyphs">Slop tank S</text>
<text x="155" y="723.5" textLength="18" lengthAdjust="spacingAndGlyphs">SLS</text>
<text x="212.5" y="723.5" textLength="32" lengthAdjust="spacingAndGlyphs">104.56</text>
<text x="21.5" y="741.5" textLength="56" lengthAdjust="spacingAndGlyphs">Slop tank P</text>
<text x="155" y="741.5" textLength="18" lengthAdjust="spacingAndGlyphs">SLP</text>
<text x="212.5" y="741.5" textLength="32" lengthAdjust="spacingAndGlyphs">104.81</text>
</g>
<g class="c">
<rect x="1025" y="513" width="17" height="343" fill="url(#dith)"/>
<rect x="6" y="855" width="1020" height="16" fill="url(#dith)"/>
<rect x="1025" y="513" width="16" height="16" fill="#cccccc"/><rect x="1025" y="513" width="15" height="1" fill="#e8e8e8"/><rect x="1025" y="513" width="1" height="15" fill="#e8e8e8"/><rect x="1026" y="514" width="13" height="1" fill="#ffffff"/><rect x="1026" y="514" width="1" height="13" fill="#ffffff"/><rect x="1025" y="528" width="16" height="1" fill="#404040"/><rect x="1040" y="513" width="1" height="16" fill="#404040"/><rect x="1026" y="527" width="14" height="1" fill="#808080"/><rect x="1039" y="514" width="1" height="14" fill="#808080"/>
<rect x="1025" y="839" width="16" height="16" fill="#cccccc"/><rect x="1025" y="839" width="15" height="1" fill="#e8e8e8"/><rect x="1025" y="839" width="1" height="15" fill="#e8e8e8"/><rect x="1026" y="840" width="13" height="1" fill="#ffffff"/><rect x="1026" y="840" width="1" height="13" fill="#ffffff"/><rect x="1025" y="854" width="16" height="1" fill="#404040"/><rect x="1040" y="839" width="1" height="16" fill="#404040"/><rect x="1026" y="853" width="14" height="1" fill="#808080"/><rect x="1039" y="840" width="1" height="14" fill="#808080"/>
<rect x="1025" y="676" width="16" height="16" fill="#cccccc"/><rect x="1025" y="676" width="15" height="1" fill="#e8e8e8"/><rect x="1025" y="676" width="1" height="15" fill="#e8e8e8"/><rect x="1026" y="677" width="13" height="1" fill="#ffffff"/><rect x="1026" y="677" width="1" height="13" fill="#ffffff"/><rect x="1025" y="691" width="16" height="1" fill="#404040"/><rect x="1040" y="676" width="1" height="16" fill="#404040"/><rect x="1026" y="690" width="14" height="1" fill="#808080"/><rect x="1039" y="677" width="1" height="14" fill="#808080"/>
<rect x="6" y="855" width="16" height="16" fill="#cccccc"/><rect x="6" y="855" width="15" height="1" fill="#e8e8e8"/><rect x="6" y="855" width="1" height="15" fill="#e8e8e8"/><rect x="7" y="856" width="13" height="1" fill="#ffffff"/><rect x="7" y="856" width="1" height="13" fill="#ffffff"/><rect x="6" y="870" width="16" height="1" fill="#404040"/><rect x="21" y="855" width="1" height="16" fill="#404040"/><rect x="7" y="869" width="14" height="1" fill="#808080"/><rect x="20" y="856" width="1" height="14" fill="#808080"/>
<rect x="22" y="855" width="16" height="16" fill="#cccccc"/><rect x="22" y="855" width="15" height="1" fill="#e8e8e8"/><rect x="22" y="855" width="1" height="15" fill="#e8e8e8"/><rect x="23" y="856" width="13" height="1" fill="#ffffff"/><rect x="23" y="856" width="1" height="13" fill="#ffffff"/><rect x="22" y="870" width="16" height="1" fill="#404040"/><rect x="37" y="855" width="1" height="16" fill="#404040"/><rect x="23" y="869" width="14" height="1" fill="#808080"/><rect x="36" y="856" width="1" height="14" fill="#808080"/>
<rect x="1009" y="855" width="16" height="16" fill="#cccccc"/><rect x="1009" y="855" width="15" height="1" fill="#e8e8e8"/><rect x="1009" y="855" width="1" height="15" fill="#e8e8e8"/><rect x="1010" y="856" width="13" height="1" fill="#ffffff"/><rect x="1010" y="856" width="1" height="13" fill="#ffffff"/><rect x="1009" y="870" width="16" height="1" fill="#404040"/><rect x="1024" y="855" width="1" height="16" fill="#404040"/><rect x="1010" y="869" width="14" height="1" fill="#808080"/><rect x="1023" y="856" width="1" height="14" fill="#808080"/>
<rect x="1025" y="855" width="17" height="17" fill="#cccccc"/>
</g>
<path d="M1029 524 L1037 524 L1033 520 Z" fill="#000"/>
<path d="M1029 845 L1037 845 L1033 849 Z" fill="#000"/>
<path d="M16 859 L16 867 L12 863 Z" fill="#000"/>
<path d="M1015 859 L1015 867 L1019 863 Z" fill="#000"/><!-- INFO PANEL -->
<g class="c">
<rect x="1047" y="492" width="1" height="384" fill="#808080"/><rect x="1048" y="493" width="1" height="382" fill="#ffffff"/>
<rect x="1047" y="492" width="8" height="1" fill="#808080"/><rect x="1048" y="493" width="7" height="1" fill="#ffffff"/>
<rect x="1083" y="492" width="195" height="1" fill="#808080"/><rect x="1083" y="493" width="194" height="1" fill="#ffffff"/>
<rect x="1277" y="492" width="1" height="384" fill="#808080"/><rect x="1278" y="492" width="1" height="385" fill="#ffffff"/>
<rect x="1047" y="875" width="231" height="1" fill="#808080"/><rect x="1047" y="876" width="232" height="1" fill="#ffffff"/>
<rect x="1063" y="522" width="209" height="1" fill="#808080"/><rect x="1063" y="523" width="209" height="1" fill="#ffffff"/>
</g>
<g font-size="12" fill="#000">
<text x="1055.7" y="498" textLength="27.2" lengthAdjust="spacingAndGlyphs">Инфо</text>
<text x="1056.5" y="564.5" textLength="30" lengthAdjust="spacingAndGlyphs">Cargo:</text>
<text x="1062.5" y="577" textLength="27" lengthAdjust="spacingAndGlyphs">Petrol</text>
<text x="1056.5" y="603" textLength="42" lengthAdjust="spacingAndGlyphs">Балласт</text>
<text x="1056.5" y="628.5" textLength="14" lengthAdjust="spacingAndGlyphs">ТТ</text>
<text x="1056.5" y="641.5" textLength="15" lengthAdjust="spacingAndGlyphs">ДТ</text>
<text x="1056.5" y="655" textLength="62" lengthAdjust="spacingAndGlyphs">Смаз.масло</text>
<text x="1056.5" y="668" textLength="37" lengthAdjust="spacingAndGlyphs">Прочее</text>
<text x="1056.5" y="694" textLength="36" lengthAdjust="spacingAndGlyphs">ИТОГО</text>
</g>
<g class="sr" font-size="11" font-weight="bold">
<text x="1143" y="540" fill="#800000" textLength="51" lengthAdjust="spacingAndGlyphs">Объем, м3</text>
<text x="1215.5" y="540" fill="#800080" textLength="29" lengthAdjust="spacingAndGlyphs">Вес, т</text>
</g>
<g font-size="12">
<g fill="#800000">
<text x="1151.8" y="577" textLength="33" lengthAdjust="spacingAndGlyphs">2888.0</text>
<text x="1151.8" y="603" textLength="15" lengthAdjust="spacingAndGlyphs">0.0</text>
<text x="1151.8" y="628.5" textLength="15" lengthAdjust="spacingAndGlyphs">0.0</text>
<text x="1151.8" y="641.5" textLength="15" lengthAdjust="spacingAndGlyphs">0.0</text>
<text x="1151.8" y="655" textLength="15" lengthAdjust="spacingAndGlyphs">0.0</text>
<text x="1151.8" y="668" textLength="15" lengthAdjust="spacingAndGlyphs">0.0</text>
<text x="1151.8" y="681" textLength="15" lengthAdjust="spacingAndGlyphs">0.0</text>
<text x="1151.8" y="694" textLength="15" lengthAdjust="spacingAndGlyphs">0.0</text>
<text x="1151.8" y="719" textLength="33" lengthAdjust="spacingAndGlyphs">2888.0</text>
</g>
<g fill="#800080">
<text x="1215.5" y="577" textLength="33" lengthAdjust="spacingAndGlyphs">2079.4</text>
<text x="1215.5" y="603" textLength="15" lengthAdjust="spacingAndGlyphs">0.0</text>
<text x="1215.5" y="628.5" textLength="15" lengthAdjust="spacingAndGlyphs">0.0</text>
<text x="1215.5" y="641.5" textLength="15" lengthAdjust="spacingAndGlyphs">0.0</text>
<text x="1215.5" y="655" textLength="15" lengthAdjust="spacingAndGlyphs">0.0</text>
<text x="1215.5" y="668" textLength="15" lengthAdjust="spacingAndGlyphs">0.0</text>
<text x="1215.5" y="681" textLength="15" lengthAdjust="spacingAndGlyphs">0.0</text>
<text x="1215.5" y="694" textLength="15" lengthAdjust="spacingAndGlyphs">0.0</text>
<text x="1215.5" y="719" textLength="33" lengthAdjust="spacingAndGlyphs">2079.4</text>
</g>
</g>
<!-- BOTTOM STRIP -->
<g class="c">
<rect x="0" y="877" width="1280" height="1" fill="#ffffff"/>
<rect x="0" y="878" width="529" height="97" fill="#fdfdfd"/>
<rect x="0" y="957" width="529" height="18" fill="#0099ff"/>
<rect x="426" y="878" width="3" height="97" fill="#c8c8c8"/>
<rect x="426" y="957" width="3" height="18" fill="#a8d8ff"/>
</g>
<!-- ship profile -->
<path d="M12 932.5 L12.5 924.4 L14.8 915 L18.4 907.5 H33.6 L34.4 908.3 H49.7 V898.6 H60.6 V890.8 L66.4 882.2 H82.5 L92.2 890 V921.25 H107 L121.9 932.2" fill="none" stroke="#000" stroke-width="1.2"/>
<path d="M12 932.5 H312 L367 918.3 H411.6 L397.8 940.7 L409.6 947 L405.4 953 L397.7 957.3 L389 960.3 H44.7 L42.7 955.2 L40.6 948.6 L38.6 947.1 L11.2 941 Z" fill="#fdfdfd" stroke="#000" stroke-width="1.1"/>
<path d="M0 956.5 H232 M232 957.5 H397" stroke="#000" stroke-width="1" fill="none"/>
<!-- section view -->
<path d="M452.5 939.5 H506.5 V955 Q506.5 960 501 960 H458 Q452.5 960 452.5 955 Z" fill="#fdfdfd" stroke="#000" stroke-width="1.2"/>
<path d="M429 956.5 H529" stroke="#000" stroke-width="1" />
<path d="M452.5 956.5 H506.5" stroke="#000" stroke-width="1"/>
<rect x="456.5" y="924.5" width="46" height="15" fill="#fdfdfd" stroke="#000" stroke-width="1.2"/>
<path d="M456.5 931.5 H502.5" stroke="#000" stroke-width="1.2"/>
<rect x="454.5" y="916.5" width="50" height="8" fill="#fdfdfd" stroke="#000" stroke-width="1.2"/>
<path d="M474.8 900 V916" stroke="#000" stroke-width="1.6"/>
<path d="M470 910.8 H480" stroke="#000" stroke-width="2"/>
<rect x="468" y="938" width="22" height="2" fill="#000"/>
<g font-size="13" fill="#000">
<text x="434.5" y="946.5" textLength="8" lengthAdjust="spacingAndGlyphs">P</text>
<text x="516.5" y="946.5" textLength="8" lengthAdjust="spacingAndGlyphs">S</text>
</g>
<!-- RESULTS PANEL -->
<g class="c">
<rect x="529" y="878" width="751" height="97" fill="#cccccc"/>
<rect x="529" y="883" width="1" height="90" fill="#808080"/><rect x="530" y="884" width="1" height="88" fill="#ffffff"/>
<rect x="529" y="883" width="7" height="1" fill="#808080"/><rect x="530" y="884" width="6" height="1" fill="#ffffff"/>
<rect x="843" y="883" width="435" height="1" fill="#808080"/><rect x="843" y="884" width="434" height="1" fill="#ffffff"/>
<rect x="1277" y="883" width="1" height="90" fill="#808080"/><rect x="1278" y="883" width="1" height="91" fill="#ffffff"/>
<rect x="529" y="972" width="749" height="1" fill="#808080"/><rect x="529" y="973" width="750" height="1" fill="#ffffff"/>
</g>
<text x="537.5" y="889" font-size="11" fill="#880000" style="white-space:pre" textLength="305" lengthAdjust="spacingAndGlyphs">Результаты - режим offline - отображение осадок на марках</text>
<g class="sr" font-size="16.5" stroke-width="0.45">
<text font-weight="bold" stroke-width="0" x="537" y="913" fill="#000" stroke="#000" textLength="11" lengthAdjust="spacingAndGlyphs">D</text>
<text font-weight="bold" stroke-width="0" x="561" y="913" fill="#000" stroke="#000">:</text>
<text font-weight="bold" stroke-width="0" x="581" y="913" fill="#101070" stroke="#101070" textLength="48.5" lengthAdjust="spacingAndGlyphs">4289 т</text>
<text font-weight="bold" stroke-width="0" x="537" y="950.5" fill="#000" stroke="#000" textLength="27" lengthAdjust="spacingAndGlyphs">DW</text>
<text font-weight="bold" stroke-width="0" x="573" y="950.5" fill="#000" stroke="#000">:</text>
<text font-weight="bold" stroke-width="0" x="581" y="950.5" fill="#101070" stroke="#101070" textLength="48.5" lengthAdjust="spacingAndGlyphs">2153 т</text>
<text x="657" y="917" fill="#000" stroke="#000" textLength="20.5" lengthAdjust="spacingAndGlyphs">Тн</text>
<text x="682" y="917" fill="#000" stroke="#000">:</text>
<text x="705" y="917" fill="#000" stroke="#000" textLength="47" lengthAdjust="spacingAndGlyphs">1.52 м</text>
<text x="657" y="941.5" fill="#000" stroke="#000" textLength="20.5" lengthAdjust="spacingAndGlyphs">Тк</text>
<text x="682" y="941.5" fill="#000" stroke="#000">:</text>
<text x="705" y="941.5" fill="#000" stroke="#000" textLength="47" lengthAdjust="spacingAndGlyphs">2.39 м</text>
<text font-weight="bold" stroke-width="0" x="769" y="917" fill="#000" stroke="#000" textLength="40" lengthAdjust="spacingAndGlyphs">Крен</text>
<text font-weight="bold" stroke-width="0" x="812" y="917" fill="#000" stroke="#000">:</text>
<text font-weight="bold" stroke-width="0" x="820" y="917" fill="#101070" stroke="#101070" textLength="100" lengthAdjust="spacingAndGlyphs">0.01 град. ЛБ</text>
<text x="925" y="917" fill="#000" stroke="#000" textLength="72" lengthAdjust="spacingAndGlyphs">GM(нач):</text>
<text x="1017.5" y="917" fill="#101070" stroke="#101070" textLength="48.5" lengthAdjust="spacingAndGlyphs">9.85 м</text>
<text font-weight="bold" stroke-width="0" x="769" y="955" fill="#000" stroke="#000" textLength="49" lengthAdjust="spacingAndGlyphs">Дифф.</text>
<text font-weight="bold" stroke-width="0" x="821" y="955" fill="#101070" stroke="#101070" textLength="53" lengthAdjust="spacingAndGlyphs">-0.96 м</text>
<text x="925" y="955" fill="#000" stroke="#000" textLength="81" lengthAdjust="spacingAndGlyphs">GM(испр):</text>
<text x="1017.5" y="955" fill="#101070" stroke="#101070" textLength="48.5" lengthAdjust="spacingAndGlyphs">8.34 м</text>
</g>
<text x="545.5" y="968.5" font-size="12" fill="#000" style="white-space:pre" textLength="168" lengthAdjust="spacingAndGlyphs">Плотность заб.воды: 1.025  т/м3</text>
<!-- STATUS BAR -->
<g class="c">
<rect x="0" y="975" width="1280" height="20" fill="#cccccc"/>
<rect x="0" y="957" width="1" height="18" fill="#a0f0ff"/>
<rect x="2" y="977" width="1" height="15" fill="#808080"/>
<rect x="3" y="977" width="38" height="1" fill="#ffffff"/><rect x="3" y="977" width="1" height="14" fill="#ffffff"/>
<rect x="4" y="978" width="36" height="13" fill="#000040"/>
<rect x="2" y="991" width="40" height="1" fill="#ffffff"/><rect x="40" y="977" width="1" height="15" fill="#ffffff"/>
<rect x="42" y="977" width="1236" height="1" fill="#808080"/><rect x="42" y="977" width="1" height="15" fill="#808080"/>
<rect x="42" y="992" width="1237" height="1" fill="#ffffff"/><rect x="1277" y="977" width="1" height="16" fill="#ffffff"/>
<rect x="0" y="994" width="1280" height="1" fill="#808080"/>
</g>
<path d="M34.5 985 L36 983 L36 990 L30 990 Z" fill="#707070"/>
<path d="M27 988.5 L31 984.5 L34 981.5 L35 982.5 L33 986 L28.5 989.5 Z" fill="#c8c8c8"/>
<rect x="27" y="981" width="2" height="2" fill="#ffffff"/>
<text x="456.5" y="989" class="sr" font-size="12" fill="#000" textLength="70.5" lengthAdjust="spacingAndGlyphs">Valcom, 2014.</text>
<!-- DIALOG -->
<g class="c">
<rect x="269" y="189" width="741" height="645" fill="#cccccc"/>
<rect x="269" y="189" width="740" height="1" fill="#dcdcdc"/><rect x="269" y="189" width="1" height="644" fill="#dcdcdc"/>
<rect x="270" y="190" width="738" height="1" fill="#ffffff"/><rect x="270" y="190" width="1" height="642" fill="#ffffff"/>
<rect x="1008" y="190" width="1" height="643" fill="#808080"/><rect x="1009" y="189" width="1" height="645" fill="#404040"/>
<rect x="270" y="832" width="739" height="1" fill="#808080"/><rect x="269" y="833" width="741" height="1" fill="#404040"/>
<rect x="272" y="192" width="62" height="15" fill="#0a246a"/>
<rect x="334" y="192" width="53" height="15" fill="#2b3282"/>
<rect x="387" y="192" width="74" height="15" fill="#3a3a9c"/>
<rect x="461" y="192" width="133" height="15" fill="#3a6ea6"/>
<rect x="594" y="192" width="77" height="15" fill="#6a62ae"/>
<rect x="671" y="192" width="145" height="15" fill="#6c9ece"/>
<rect x="816" y="192" width="63" height="15" fill="#9e9ccc"/>
<rect x="879" y="192" width="27" height="15" fill="#98ccc8"/>
<rect x="906" y="192" width="102" height="15" fill="#a6caf0"/>
<rect x="995" y="194" width="10" height="11" fill="#cccccc"/>
<rect x="995" y="194" width="10" height="1" fill="#ffffff"/><rect x="995" y="194" width="1" height="11" fill="#ffffff"/>
<rect x="995" y="204" width="10" height="1" fill="#404040"/><rect x="1004" y="194" width="1" height="11" fill="#404040"/>
</g>
<path d="M997.5 196.5 L1002 201 M1002 196.5 L997.5 201" stroke="#000" stroke-width="1"/>
<text x="274" y="204" font-size="11" font-weight="bold" fill="#ffffff" style="white-space:pre" textLength="489.5" lengthAdjust="spacingAndGlyphs">Перерезыв. силы в допускаемых переделах  Изгиб. моменты в допуск. переделах</text>
<text x="284" y="221" font-size="11" fill="#000" textLength="68.5" lengthAdjust="spacingAndGlyphs">Условия моря</text>
<g class="c">
<rect x="352" y="228" width="536" height="113" fill="#c4c4c4"/>
<rect x="352" y="228" width="520" height="113" fill="#cecece"/>
<rect x="353" y="247" width="64" height="18" fill="#043270"/>
<rect x="352" y="265" width="520" height="1" fill="#9a9a9a"/>
<rect x="352" y="284" width="520" height="1" fill="#9a9a9a"/>
<rect x="352" y="303" width="520" height="1" fill="#9a9a9a"/>
<rect x="352" y="322" width="520" height="1" fill="#9a9a9a"/>
<rect x="417" y="246" width="1" height="95" fill="#9a9a9a"/>
<rect x="482" y="246" width="1" height="95" fill="#9a9a9a"/>
<rect x="547" y="246" width="1" height="95" fill="#9a9a9a"/>
<rect x="612" y="246" width="1" height="95" fill="#9a9a9a"/>
<rect x="677" y="246" width="1" height="95" fill="#9a9a9a"/>
<rect x="742" y="246" width="1" height="95" fill="#9a9a9a"/>
<rect x="807" y="246" width="1" height="95" fill="#9a9a9a"/>
<rect x="872" y="246" width="1" height="95" fill="#9a9a9a"/>
<rect x="352" y="246" width="520" height="1" fill="#000000"/>
<rect x="417" y="228" width="1" height="19" fill="#000000"/>
<rect x="482" y="228" width="1" height="19" fill="#000000"/>
<rect x="547" y="228" width="1" height="19" fill="#000000"/>
<rect x="612" y="228" width="1" height="19" fill="#000000"/>
<rect x="677" y="228" width="1" height="19" fill="#000000"/>
<rect x="742" y="228" width="1" height="19" fill="#000000"/>
<rect x="807" y="228" width="1" height="19" fill="#000000"/>
<rect x="872" y="228" width="1" height="19" fill="#000000"/>
<rect x="352" y="227" width="537" height="1" fill="#000"/><rect x="352" y="340" width="537" height="1" fill="#000"/>
<rect x="352" y="227" width="1" height="114" fill="#000"/><rect x="888" y="227" width="1" height="114" fill="#000"/>
</g>
<g font-size="11.5" fill="#000" text-anchor="middle">
<text x="384.5" y="242" textLength="47" lengthAdjust="spacingAndGlyphs">Шпангоут</text>
<text x="449.5" y="242" textLength="22" lengthAdjust="spacingAndGlyphs">X, м</text>
<text x="514.5" y="242" textLength="21" lengthAdjust="spacingAndGlyphs">SF, т</text>
<text x="579.5" y="242" textLength="49" lengthAdjust="spacingAndGlyphs">SF_max, т</text>
<text x="644.5" y="242" textLength="50" lengthAdjust="spacingAndGlyphs">SF_sea, %</text>
<text x="709.5" y="242" textLength="35.5" lengthAdjust="spacingAndGlyphs">BM, тм</text>
<text x="774.5" y="242" textLength="57" lengthAdjust="spacingAndGlyphs">BM_max,тм</text>
<text x="839.5" y="242" textLength="53.5" lengthAdjust="spacingAndGlyphs">BM_sea, %</text>
<text x="384.5" y="260.5" fill="#081848">0</text>
<text x="449.5" y="260.5">-67.02</text>
<text x="514.5" y="260.5">94</text>
<text x="579.5" y="260.5">700</text>
<text x="644.5" y="260.5">13.5</text>
<text x="709.5" y="260.5">173</text>
<text x="774.5" y="260.5">4470</text>
<text x="839.5" y="260.5">3.9</text>
<text x="384.5" y="279.5">65</text>
<text x="449.5" y="279.5">-31.26</text>
<text x="514.5" y="279.5">8</text>
<text x="579.5" y="279.5">700</text>
<text x="644.5" y="279.5">1.2</text>
<text x="709.5" y="279.5">3943</text>
<text x="774.5" y="279.5">4470</text>
<text x="839.5" y="279.5">88.2</text>
<text x="384.5" y="298.5">122</text>
<text x="449.5" y="298.5">1.01</text>
<text x="514.5" y="298.5">-78</text>
<text x="579.5" y="298.5">-700</text>
<text x="644.5" y="298.5">11.1</text>
<text x="709.5" y="298.5">2514</text>
<text x="774.5" y="298.5">4470</text>
<text x="839.5" y="298.5">56.2</text>
<text x="384.5" y="317.5">175</text>
<text x="449.5" y="317.5">29.24</text>
<text x="514.5" y="317.5">-68</text>
<text x="579.5" y="317.5">-700</text>
<text x="644.5" y="317.5">9.7</text>
<text x="709.5" y="317.5">577</text>
<text x="774.5" y="317.5">4470</text>
<text x="839.5" y="317.5">12.9</text>
<text x="384.5" y="336.5">245</text>
<text x="449.5" y="336.5">67.74</text>
<text x="514.5" y="336.5">-8</text>
<text x="579.5" y="336.5">-700</text>
<text x="644.5" y="336.5">1.2</text>
<text x="709.5" y="336.5">8</text>
<text x="774.5" y="336.5">4470</text>
<text x="839.5" y="336.5">0.2</text>
</g>
<g class="c">
<rect x="352" y="353" width="1" height="34" fill="#808080"/><rect x="353" y="354" width="1" height="32" fill="#ffffff"/>
<rect x="352" y="353" width="9" height="1" fill="#808080"/><rect x="353" y="354" width="8" height="1" fill="#ffffff"/>
<rect x="456" y="353" width="432" height="1" fill="#808080"/><rect x="456" y="354" width="431" height="1" fill="#ffffff"/>
<rect x="887" y="353" width="1" height="34" fill="#808080"/><rect x="888" y="353" width="1" height="35" fill="#ffffff"/>
<rect x="352" y="386" width="536" height="1" fill="#808080"/><rect x="352" y="387" width="537" height="1" fill="#ffffff"/>
</g>
<g font-size="11" fill="#000">
<text x="363.5" y="358" textLength="90.5" lengthAdjust="spacingAndGlyphs">Bending Deflection</text>
<text x="376.5" y="376" textLength="72" lengthAdjust="spacingAndGlyphs">Full Vessel (m) :</text>
<text x="456.5" y="376" textLength="25.5" lengthAdjust="spacingAndGlyphs">0.001</text>
<text x="576" y="376" textLength="67.5" lengthAdjust="spacingAndGlyphs">On marks (m) :</text>
<text x="656.5" y="376" textLength="25.5" lengthAdjust="spacingAndGlyphs">0.001</text>
</g>
<g class="c">
<rect x="276" y="392" width="600" height="400" fill="#808080"/><rect x="277" y="393" width="598" height="398" fill="#ffffff"/><rect x="278" y="394" width="596" height="396" fill="#e2e2e2"/>
<rect x="880" y="392" width="60" height="400" fill="#808080"/><rect x="881" y="393" width="58" height="398" fill="#ffffff"/><rect x="882" y="394" width="56" height="396" fill="#fdfdfd"/>
<rect x="942" y="392" width="60" height="400" fill="#808080"/><rect x="943" y="393" width="58" height="398" fill="#ffffff"/><rect x="944" y="394" width="56" height="396" fill="#fdfdfd"/>
<rect x="316" y="412" width="551" height="346" fill="#fdfdfd"/>
</g>
<g class="c" fill="#9a9a9a">
<rect x="345" y="412" width="1" height="346"/>
<rect x="374" y="412" width="1" height="346"/>
<rect x="403" y="412" width="1" height="346"/>
<rect x="432" y="412" width="1" height="346"/>
<rect x="461" y="412" width="1" height="346"/>
<rect x="490" y="412" width="1" height="346"/>
<rect x="519" y="412" width="1" height="346"/>
<rect x="548" y="412" width="1" height="346"/>
<rect x="576" y="412" width="1" height="346"/>
<rect x="605" y="412" width="1" height="346"/>
<rect x="634" y="412" width="1" height="346"/>
<rect x="663" y="412" width="1" height="346"/>
<rect x="692" y="412" width="1" height="346"/>
<rect x="721" y="412" width="1" height="346"/>
<rect x="750" y="412" width="1" height="346"/>
<rect x="779" y="412" width="1" height="346"/>
<rect x="808" y="412" width="1" height="346"/>
<rect x="837" y="412" width="1" height="346"/>
<rect x="316" y="585" width="551" height="1"/>
</g>
<path d="M384.5 522.4 L385 505.5 L386.9 490.4 L391.3 467.4 L399.5 467.4 L400.1 468.4 L415.8 468.7 L416.4 469.4 L423.6 469.4 L423.6 447.5 L434.3 447.5 L434.7 428.9 L439.7 412.5 L456.6 412.5 L466.1 428.9 L466.1 497.3 L480.5 497.3 L495.6 521.8 L688.3 522.2 L747.6 491.4 L790.6 491.4 L776.5 540.1 L777.3 542.3 L785.4 547.5 L788 555.7 L786.2 567.6 L778.7 578 L772.8 581 L765.4 584.2 L417.4 584.2 L412.4 554.8 L393.3 546.7 L384.5 542.7 Z" fill="#c0c0c0" stroke="#000" stroke-width="1"/>
<path d="M384.5 522.4 H688" stroke="#000" stroke-width="1"/>
<g stroke-width="2">
<path d="M361 546.3 H825" stroke="#800000"/>
<path d="M361 568 H825" stroke="#ff2020"/>
<path d="M361 601.2 H825" stroke="#ff2020"/>
<path d="M361 640 H825" stroke="#800000"/>
</g>
<path d="M350.2 547.2 L372.7 547.2 L374.6 552.2 L396.8 552.2 L399.4 542.7 L421.6 542.7 L422.9 557.4 L436 554.8 L438 537.8 L440.6 534.6 L445.1 534.6 L447.1 542.7 L455.6 543.5 L465 545.5 L480 546 L500 544 L518 542.8 L538 542.8 L545 545.5 L560 546 L579 545.8 L580 542.2 L614 542.2 L615 546 L640 546 L660 547 L680.8 549 L682 546.5 L694 546.5 L700 546 L760 546 L761 543.8 L778.7 543.5 L786.9 540.1 L788.8 542.3 L793.6 564.6 L808.4 565.3 L809.9 569.8 L829.2 570.1 L832.2 582.4" fill="none" stroke="#2020c8" stroke-width="1.1"/>
<path d="M357 584 L358.3 582.2 L375.3 565.3 L385.7 552.9 L394.9 547 L405.3 540.4 L420 540 L470.6 541.1 L500 543 L560 546 L640 548 L716.4 552.7 L763.9 555 L787.7 555.7 L807 560.9 L815.9 566.1 L829.2 579.5" fill="none" stroke="#20e020" stroke-width="1.1"/>
<path d="M357 584.5 L383.1 579.6 L387 580.3 L424.9 581 L462.8 582.9 L500 584.6 L540 585 L829 585" fill="none" stroke="#008000" stroke-width="2"/>
<path d="M350.4 584.6 L360.9 583.6 L372.7 579.6 L405.3 566.6 L418.4 560 L435.3 556.1 L457.6 552.2 L483.7 549.9 L500 550.2 L518 551.6 L546 555.2 L574.4 559.4 L602.5 564.3 L630.6 569.2 L670 575 L704.5 582.4 L749 586.6 L787.7 586.6 L793.6 584.6 L829.2 584.6" fill="none" stroke="#0000e0" stroke-width="2.6"/>
<g class="c" fill="#b8b070">
<rect x="316" y="758" width="1" height="6"/>
<rect x="345" y="758" width="1" height="6"/>
<rect x="374" y="758" width="1" height="6"/>
<rect x="403" y="758" width="1" height="6"/>
<rect x="432" y="758" width="1" height="6"/>
<rect x="461" y="758" width="1" height="6"/>
<rect x="490" y="758" width="1" height="6"/>
<rect x="519" y="758" width="1" height="6"/>
<rect x="548" y="758" width="1" height="6"/>
<rect x="576" y="758" width="1" height="6"/>
<rect x="605" y="758" width="1" height="6"/>
<rect x="634" y="758" width="1" height="6"/>
<rect x="663" y="758" width="1" height="6"/>
<rect x="692" y="758" width="1" height="6"/>
<rect x="721" y="758" width="1" height="6"/>
<rect x="750" y="758" width="1" height="6"/>
<rect x="779" y="758" width="1" height="6"/>
<rect x="808" y="758" width="1" height="6"/>
<rect x="837" y="758" width="1" height="6"/>
<rect x="866" y="758" width="1" height="6"/>
<rect x="308" y="412" width="8" height="1"/>
<rect x="308" y="585" width="8" height="1"/>
<rect x="308" y="757" width="8" height="1"/>
</g>
<g font-size="10" fill="#000060" stroke="#000060" stroke-width="0.3" text-anchor="middle">
<text x="317.0" y="774.5" textLength="19.5" lengthAdjust="spacingAndGlyphs">-80.0</text>
<text x="345.9" y="774.5" textLength="19.5" lengthAdjust="spacingAndGlyphs">-71.6</text>
<text x="374.9" y="774.5" textLength="19.5" lengthAdjust="spacingAndGlyphs">-63.2</text>
<text x="403.8" y="774.5" textLength="19.5" lengthAdjust="spacingAndGlyphs">-54.7</text>
<text x="432.8" y="774.5" textLength="19.5" lengthAdjust="spacingAndGlyphs">-46.3</text>
<text x="461.7" y="774.5" textLength="19.5" lengthAdjust="spacingAndGlyphs">-37.9</text>
<text x="490.6" y="774.5" textLength="19.5" lengthAdjust="spacingAndGlyphs">-29.5</text>
<text x="519.6" y="774.5" textLength="19.5" lengthAdjust="spacingAndGlyphs">-21.1</text>
<text x="548.5" y="774.5" textLength="19.5" lengthAdjust="spacingAndGlyphs">-12.6</text>
<text x="577.5" y="774.5" textLength="14.3" lengthAdjust="spacingAndGlyphs">-4.2</text>
<text x="606.4" y="774.5" textLength="12" lengthAdjust="spacingAndGlyphs">4.2</text>
<text x="635.3" y="774.5" textLength="14.3" lengthAdjust="spacingAndGlyphs">12.6</text>
<text x="664.3" y="774.5" textLength="14.3" lengthAdjust="spacingAndGlyphs">21.1</text>
<text x="693.2" y="774.5" textLength="14.3" lengthAdjust="spacingAndGlyphs">29.5</text>
<text x="722.2" y="774.5" textLength="14.3" lengthAdjust="spacingAndGlyphs">37.9</text>
<text x="751.1" y="774.5" textLength="14.3" lengthAdjust="spacingAndGlyphs">46.3</text>
<text x="780.0" y="774.5" textLength="14.3" lengthAdjust="spacingAndGlyphs">54.7</text>
<text x="809.0" y="774.5" textLength="14.3" lengthAdjust="spacingAndGlyphs">63.2</text>
<text x="837.9" y="774.5" textLength="14.3" lengthAdjust="spacingAndGlyphs">71.6</text>
<text x="866.9" y="774.5" textLength="14.3" lengthAdjust="spacingAndGlyphs">80.0</text>
</g>
<g font-size="9" fill="#000060" text-anchor="end">
<text x="308" y="415.5" textLength="15" lengthAdjust="spacingAndGlyphs">100</text>
<text x="308" y="588.5">0</text>
<text x="308" y="761" textLength="15.5" lengthAdjust="spacingAndGlyphs">-100</text>
</g>
<text x="0" y="0" font-size="9" font-weight="bold" fill="#000060" transform="translate(291 596) rotate(-90)" textLength="24" lengthAdjust="spacingAndGlyphs">Вес, т</text>
<text x="404" y="409.5" font-size="13" font-weight="bold" fill="#109010" textLength="344" lengthAdjust="spacingAndGlyphs">Перерезыв. силы и изгиб. момент(морские условия)</text>
<text x="524.5" y="785.8" font-size="9.5" fill="#000060" stroke="#000060" stroke-width="0.35" textLength="135" lengthAdjust="spacingAndGlyphs">Расстояние от корм. перпен., м</text>
<g class="c">
<rect x="933" y="412" width="2" height="346" fill="#909090"/>
<rect x="995" y="412" width="2" height="346" fill="#909090"/>
</g>
<g class="c" fill="#b8b070">
<rect x="926" y="412" width="7" height="1"/>
<rect x="926" y="423" width="7" height="1"/>
<rect x="926" y="435" width="7" height="1"/>
<rect x="926" y="446" width="7" height="1"/>
<rect x="926" y="458" width="7" height="1"/>
<rect x="926" y="469" width="7" height="1"/>
<rect x="926" y="481" width="7" height="1"/>
<rect x="926" y="492" width="7" height="1"/>
<rect x="926" y="504" width="7" height="1"/>
<rect x="926" y="515" width="7" height="1"/>
<rect x="926" y="527" width="7" height="1"/>
<rect x="926" y="539" width="7" height="1"/>
<rect x="926" y="550" width="7" height="1"/>
<rect x="926" y="562" width="7" height="1"/>
<rect x="926" y="573" width="7" height="1"/>
<rect x="926" y="585" width="7" height="1"/>
<rect x="926" y="596" width="7" height="1"/>
<rect x="926" y="608" width="7" height="1"/>
<rect x="926" y="619" width="7" height="1"/>
<rect x="926" y="631" width="7" height="1"/>
<rect x="926" y="642" width="7" height="1"/>
<rect x="926" y="654" width="7" height="1"/>
<rect x="926" y="665" width="7" height="1"/>
<rect x="926" y="677" width="7" height="1"/>
<rect x="926" y="688" width="7" height="1"/>
<rect x="926" y="700" width="7" height="1"/>
<rect x="926" y="711" width="7" height="1"/>
<rect x="926" y="723" width="7" height="1"/>
<rect x="926" y="734" width="7" height="1"/>
<rect x="926" y="746" width="7" height="1"/>
<rect x="926" y="757" width="7" height="1"/>
<rect x="988" y="412" width="7" height="1"/>
<rect x="988" y="455" width="7" height="1"/>
<rect x="988" y="498" width="7" height="1"/>
<rect x="988" y="541" width="7" height="1"/>
<rect x="988" y="585" width="7" height="1"/>
<rect x="988" y="628" width="7" height="1"/>
<rect x="988" y="671" width="7" height="1"/>
<rect x="988" y="714" width="7" height="1"/>
<rect x="988" y="757" width="7" height="1"/>
</g>
<g font-size="9" font-weight="bold" fill="#000050" text-anchor="end">
<text x="925.5" y="415.5" textLength="17.0" lengthAdjust="spacingAndGlyphs">7500</text>
<text x="925.5" y="427.0" textLength="17.0" lengthAdjust="spacingAndGlyphs">7000</text>
<text x="925.5" y="438.5" textLength="17.0" lengthAdjust="spacingAndGlyphs">6500</text>
<text x="925.5" y="450.0" textLength="17.0" lengthAdjust="spacingAndGlyphs">6000</text>
<text x="925.5" y="461.5" textLength="17.0" lengthAdjust="spacingAndGlyphs">5500</text>
<text x="925.5" y="473.1" textLength="17.0" lengthAdjust="spacingAndGlyphs">5000</text>
<text x="925.5" y="484.6" textLength="17.0" lengthAdjust="spacingAndGlyphs">4500</text>
<text x="925.5" y="496.1" textLength="17.0" lengthAdjust="spacingAndGlyphs">4000</text>
<text x="925.5" y="507.6" textLength="17.0" lengthAdjust="spacingAndGlyphs">3500</text>
<text x="925.5" y="519.1" textLength="17.0" lengthAdjust="spacingAndGlyphs">3000</text>
<text x="925.5" y="530.6" textLength="17.0" lengthAdjust="spacingAndGlyphs">2500</text>
<text x="925.5" y="542.1" textLength="17.0" lengthAdjust="spacingAndGlyphs">2000</text>
<text x="925.5" y="553.6" textLength="17.0" lengthAdjust="spacingAndGlyphs">1500</text>
<text x="925.5" y="565.1" textLength="17.0" lengthAdjust="spacingAndGlyphs">1000</text>
<text x="925.5" y="576.6" textLength="12.75" lengthAdjust="spacingAndGlyphs">500</text>
<text x="925.5" y="588.1" textLength="4.25" lengthAdjust="spacingAndGlyphs">0</text>
<text x="925.5" y="599.7" textLength="17.75" lengthAdjust="spacingAndGlyphs">-500</text>
<text x="925.5" y="611.2" textLength="22.0" lengthAdjust="spacingAndGlyphs">-1000</text>
<text x="925.5" y="622.7" textLength="22.0" lengthAdjust="spacingAndGlyphs">-1500</text>
<text x="925.5" y="634.2" textLength="22.0" lengthAdjust="spacingAndGlyphs">-2000</text>
<text x="925.5" y="645.7" textLength="22.0" lengthAdjust="spacingAndGlyphs">-2500</text>
<text x="925.5" y="657.2" textLength="22.0" lengthAdjust="spacingAndGlyphs">-3000</text>
<text x="925.5" y="668.7" textLength="22.0" lengthAdjust="spacingAndGlyphs">-3500</text>
<text x="925.5" y="680.2" textLength="22.0" lengthAdjust="spacingAndGlyphs">-4000</text>
<text x="925.5" y="691.7" textLength="22.0" lengthAdjust="spacingAndGlyphs">-4500</text>
<text x="925.5" y="703.2" textLength="22.0" lengthAdjust="spacingAndGlyphs">-5000</text>
<text x="925.5" y="714.8" textLength="22.0" lengthAdjust="spacingAndGlyphs">-5500</text>
<text x="925.5" y="726.3" textLength="22.0" lengthAdjust="spacingAndGlyphs">-6000</text>
<text x="925.5" y="737.8" textLength="22.0" lengthAdjust="spacingAndGlyphs">-6500</text>
<text x="925.5" y="749.3" textLength="22.0" lengthAdjust="spacingAndGlyphs">-7000</text>
<text x="925.5" y="760.8" textLength="22.0" lengthAdjust="spacingAndGlyphs">-7500</text>
</g>
<g font-size="10" fill="#000050" text-anchor="end">
<text x="987" y="415.8" textLength="10" lengthAdjust="spacingAndGlyphs">20</text>
<text x="987" y="459.0" textLength="10" lengthAdjust="spacingAndGlyphs">15</text>
<text x="987" y="502.1" textLength="10" lengthAdjust="spacingAndGlyphs">10</text>
<text x="987" y="545.3" textLength="5" lengthAdjust="spacingAndGlyphs">5</text>
<text x="987" y="588.4" textLength="5" lengthAdjust="spacingAndGlyphs">0</text>
<text x="987" y="631.6" textLength="10" lengthAdjust="spacingAndGlyphs">-5</text>
<text x="987" y="674.8" textLength="15" lengthAdjust="spacingAndGlyphs">-10</text>
<text x="987" y="717.9" textLength="15" lengthAdjust="spacingAndGlyphs">-15</text>
<text x="987" y="761.1" textLength="15" lengthAdjust="spacingAndGlyphs">-20</text>
</g>
<text x="936.5" y="769.5" font-size="9" font-weight="bold" fill="#000050" text-anchor="end">0</text>
<text x="998.5" y="770.5" font-size="9" font-weight="bold" fill="#000050" text-anchor="end">0</text>
<text x="0" y="0" font-size="9.5" fill="#800000" transform="translate(894 612.8) rotate(-90)" textLength="69.6" lengthAdjust="spacingAndGlyphs">Перерез. сила, т</text>
<text x="0" y="0" font-size="9.5" fill="#800000" transform="translate(956 636) rotate(-90)" textLength="107.6" lengthAdjust="spacingAndGlyphs">изгиб. момент, 10000*т*м</text>
<g stroke-width="2">
<path d="M288 802.5 H322" stroke="#2828d0" stroke-width="1"/>
<path d="M288 817.5 H322" stroke="#000098" stroke-width="2"/>
<path d="M504 802.5 H538" stroke="#10e010"/>
<path d="M504 817.5 H538" stroke="#ff2020"/>
<path d="M736 802.5 H770" stroke="#108010"/>
<path d="M736 817.5 H770" stroke="#800000"/>
</g>
<g font-size="11.5" fill="#000">
<text x="328.5" y="808" textLength="92" lengthAdjust="spacingAndGlyphs">Весовая нагрузка</text>
<text x="328.5" y="823" textLength="75" lengthAdjust="spacingAndGlyphs">Изгиб. момент</text>
<text x="544" y="808" textLength="98" lengthAdjust="spacingAndGlyphs">Силы поддержания</text>
<text x="544" y="823" textLength="63" lengthAdjust="spacingAndGlyphs">Огранич. ПС</text>
<text x="776" y="808" textLength="88" lengthAdjust="spacingAndGlyphs">Перерезыв. сила</text>
<text x="776" y="823" textLength="64" lengthAdjust="spacingAndGlyphs">Огранич. ИМ</text>
</g></svg>
</body></html>
